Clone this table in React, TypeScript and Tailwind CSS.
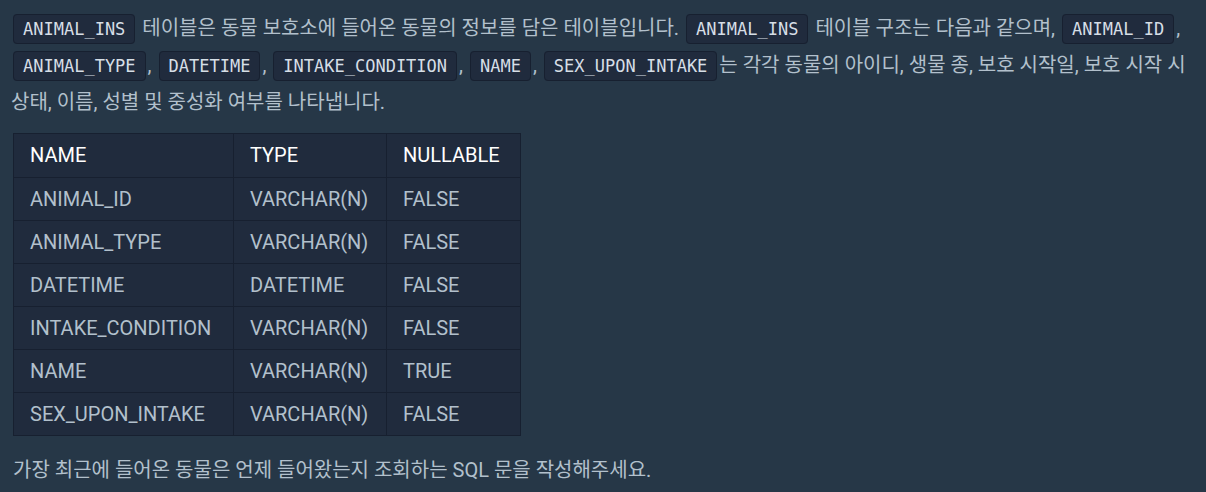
import React from "react";

const rows = [
  ["ANIMAL_ID", "VARCHAR(N)", "FALSE"],
  ["ANIMAL_TYPE", "VARCHAR(N)", "FALSE"],
  ["DATETIME", "DATETIME", "FALSE"],
  ["INTAKE_CONDITION", "VARCHAR(N)", "FALSE"],
  ["NAME", "VARCHAR(N)", "TRUE"],
  ["SEX_UPON_INTAKE", "VARCHAR(N)", "FALSE"],
];

function Code({ children }: { children: React.ReactNode }) {
  return (
    <code className="mx-[2px] rounded-[4px] border border-[#172030] bg-[#202b3d] px-[9px] py-[4px] font-['DejaVu_Sans_Mono',monospace] text-[17px] text-[#d6dee6]">
      {children}
    </code>
  );
}

export default function App() {
  return (
    <div className="min-h-[492px] bg-[#263747] pl-[11px] pr-[10px] pt-[10px] font-['Roboto','Noto_Sans_CJK_KR',sans-serif] text-[20px] leading-[36px] text-[#b2c0cc]">
      <p>
        <Code>ANIMAL_INS</Code> 테이블은 동물 보호소에 들어온 동물의 정보를 담은 테이블입니다.{" "}
        <Code>ANIMAL_INS</Code> 테이블 구조는 다음과 같으며, <Code>ANIMAL_ID</Code>,{" "}
        <Code>ANIMAL_TYPE</Code>, <Code>DATETIME</Code>, <Code>INTAKE_CONDITION</Code>,{" "}
        <Code>NAME</Code>, <Code>SEX_UPON_INTAKE</Code>는 각각 동물의 아이디, 생물 종, 보호
        시작일, 보호 시작 시 상태, 이름, 성별 및 중성화 여부를 나타냅니다.
      </p>

      <table className="ml-[2px] mt-[13px] border-collapse border border-[#172030] bg-[#202b3d] leading-[27px]">
        <thead>
          <tr className="h-[44px] text-[#ffffff]">
            <th className="w-[220px] border border-[#172030] px-[16px] text-left font-normal">NAME</th>
            <th className="w-[153px] border border-[#172030] px-[16px] text-left font-normal">TYPE</th>
            <th className="w-[134px] border border-[#172030] px-[16px] text-left font-normal">NULLABLE</th>
          </tr>
        </thead>
        <tbody>
          {rows.map((r) => (
            <tr key={r[0]} className="h-[43px]">
              {r.map((c, i) => (
                <td key={i} className="border border-[#172030] px-[16px]">
                  {c}
                </td>
              ))}
            </tr>
          ))}
        </tbody>
      </table>

      <p className="ml-[2px] mt-[16px]">
        가장 최근에 들어온 동물은 언제 들어왔는지 조회하는 SQL 문을 작성해주세요.
      </p>
    </div>
  );
}
